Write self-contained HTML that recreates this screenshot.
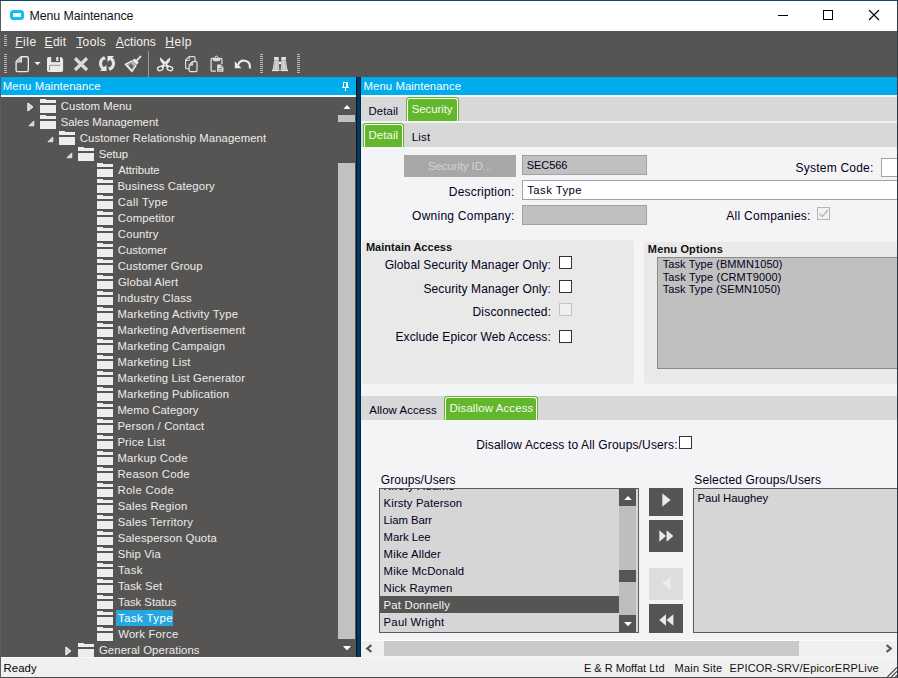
<!DOCTYPE html>
<html lang="en"><head><meta charset="utf-8"><title>Menu Maintenance</title>
<style>
html,body{margin:0;padding:0;background:#fff;}
body{width:898px;height:678px;position:relative;overflow:hidden;font-family:'Liberation Sans',sans-serif;}
#w{position:absolute;left:0;top:0;width:898px;height:678px;overflow:hidden;}
#w div,#w svg,#w span{position:absolute;display:block;}
#w .t{white-space:nowrap;line-height:16px;}
#w u{text-decoration:underline;text-underline-offset:1px;text-decoration-thickness:1px;}
</style></head><body><div id="w">
<div style="left:0px;top:0px;width:898px;height:678px;background:#fff;"></div>
<div style="left:0px;top:0px;width:898px;height:1px;background:#0f4b66;"></div>
<svg style="left:10px;top:10px" width="14" height="10" viewBox="0 0 14 10"><rect x="1.5" y="1.5" width="11" height="7" rx="2" fill="#fff" stroke="#10bef6" stroke-width="3"/></svg>
<div style="left:778px;top:15px;width:10px;height:1px;background:#000;"></div>
<div style="left:823px;top:10px;width:10px;height:10px;border:1px solid #000;box-sizing:border-box;"></div>
<svg style="left:868px;top:9px" width="12" height="12" viewBox="0 0 12 12"><path d="M1 1 L11 11 M11 1 L1 11" stroke="#000" stroke-width="1.1" fill="none"/></svg>
<div style="left:0px;top:31px;width:898px;height:46px;background:#575553;"></div>
<div style="left:4px;top:35px;width:3px;height:1px;background:#b9b8b6;"></div>
<div style="left:4px;top:37px;width:3px;height:1px;background:#b9b8b6;"></div>
<div style="left:4px;top:39px;width:3px;height:1px;background:#b9b8b6;"></div>
<div style="left:4px;top:41px;width:3px;height:1px;background:#b9b8b6;"></div>
<div style="left:4px;top:43px;width:3px;height:1px;background:#b9b8b6;"></div>
<div style="left:4px;top:45px;width:3px;height:1px;background:#b9b8b6;"></div>
<div style="left:4px;top:54px;width:3px;height:1px;background:#b9b8b6;"></div>
<div style="left:4px;top:56px;width:3px;height:1px;background:#b9b8b6;"></div>
<div style="left:4px;top:58px;width:3px;height:1px;background:#b9b8b6;"></div>
<div style="left:4px;top:60px;width:3px;height:1px;background:#b9b8b6;"></div>
<div style="left:4px;top:62px;width:3px;height:1px;background:#b9b8b6;"></div>
<div style="left:4px;top:64px;width:3px;height:1px;background:#b9b8b6;"></div>
<div style="left:4px;top:66px;width:3px;height:1px;background:#b9b8b6;"></div>
<div style="left:4px;top:68px;width:3px;height:1px;background:#b9b8b6;"></div>
<div style="left:4px;top:70px;width:3px;height:1px;background:#b9b8b6;"></div>
<div style="left:4px;top:72px;width:3px;height:1px;background:#b9b8b6;"></div>
<div style="left:260px;top:54px;width:3px;height:1px;background:#b9b8b6;"></div>
<div style="left:260px;top:56px;width:3px;height:1px;background:#b9b8b6;"></div>
<div style="left:260px;top:58px;width:3px;height:1px;background:#b9b8b6;"></div>
<div style="left:260px;top:60px;width:3px;height:1px;background:#b9b8b6;"></div>
<div style="left:260px;top:62px;width:3px;height:1px;background:#b9b8b6;"></div>
<div style="left:260px;top:64px;width:3px;height:1px;background:#b9b8b6;"></div>
<div style="left:260px;top:66px;width:3px;height:1px;background:#b9b8b6;"></div>
<div style="left:260px;top:68px;width:3px;height:1px;background:#b9b8b6;"></div>
<div style="left:260px;top:70px;width:3px;height:1px;background:#b9b8b6;"></div>
<div style="left:260px;top:72px;width:3px;height:1px;background:#b9b8b6;"></div>
<div style="left:297px;top:54px;width:3px;height:1px;background:#b9b8b6;"></div>
<div style="left:297px;top:56px;width:3px;height:1px;background:#b9b8b6;"></div>
<div style="left:297px;top:58px;width:3px;height:1px;background:#b9b8b6;"></div>
<div style="left:297px;top:60px;width:3px;height:1px;background:#b9b8b6;"></div>
<div style="left:297px;top:62px;width:3px;height:1px;background:#b9b8b6;"></div>
<div style="left:297px;top:64px;width:3px;height:1px;background:#b9b8b6;"></div>
<div style="left:297px;top:66px;width:3px;height:1px;background:#b9b8b6;"></div>
<div style="left:297px;top:68px;width:3px;height:1px;background:#b9b8b6;"></div>
<div style="left:297px;top:70px;width:3px;height:1px;background:#b9b8b6;"></div>
<div style="left:297px;top:72px;width:3px;height:1px;background:#b9b8b6;"></div>
<div style="left:148px;top:51px;width:1px;height:26px;background:#9c9a98;"></div>
<div style="left:0px;top:77px;width:356px;height:18px;background:#00abee;"></div>
<div style="left:0px;top:95px;width:356px;height:2px;background:#fbf9f7;"></div>
<div style="left:0px;top:97px;width:356px;height:560px;background:#575553;"></div>
<div style="left:343px;top:82px;width:5px;height:1px;background:#fff;"></div>
<div style="left:343px;top:82px;width:1px;height:5px;background:#fff;"></div>
<div style="left:346px;top:82px;width:2px;height:5px;background:#fff;"></div>
<div style="left:342px;top:87px;width:7px;height:1px;background:#fff;"></div>
<div style="left:345px;top:88px;width:1px;height:3px;background:#fff;"></div>
<div style="left:884px;top:82px;width:5px;height:1px;background:#fff;"></div>
<div style="left:884px;top:82px;width:1px;height:5px;background:#fff;"></div>
<div style="left:887px;top:82px;width:2px;height:5px;background:#fff;"></div>
<div style="left:883px;top:87px;width:7px;height:1px;background:#fff;"></div>
<div style="left:886px;top:88px;width:1px;height:3px;background:#fff;"></div>
<div style="left:338px;top:115px;width:17px;height:7px;background:#c1c1c1;"></div>
<div style="left:338px;top:163px;width:17px;height:476px;background:#c1c1c1;"></div>
<svg style="left:342.6px;top:104.8px" width="8" height="4.5" viewBox="0 0 8 4.5"><path d="M0 4.5 L4.0 0 L8 4.5 Z" fill="#fff"/></svg>
<svg style="left:342.6px;top:645.8px" width="8" height="4.5" viewBox="0 0 8 4.5"><path d="M0 0 L4.0 4.5 L8 0 Z" fill="#fff"/></svg>
<div style="left:40px;top:99.2px;width:6px;height:2px;background:#ededed;"></div>
<div style="left:40px;top:100.3px;width:16px;height:2.7px;background:#ededed;"></div>
<div style="left:40px;top:104.6px;width:16px;height:8.2px;background:#ededed;"></div>
<svg style="left:26.8px;top:101.5px" width="7" height="10" viewBox="0 0 7 10"><path d="M0.9 1 L5.9 5 L0.9 9 Z" fill="#cfcfcf" stroke="#fff" stroke-width="1" stroke-linejoin="miter"/></svg>
<div style="left:40px;top:115.2px;width:6px;height:2px;background:#ededed;"></div>
<div style="left:40px;top:116.3px;width:16px;height:2.7px;background:#ededed;"></div>
<div style="left:40px;top:120.6px;width:16px;height:8.2px;background:#ededed;"></div>
<svg style="left:27.8px;top:120px" width="7" height="7" viewBox="0 0 7 7"><path d="M5.8 0.9 V5.8 H0.9 Z" fill="#d6d6d6" stroke="#f6f6f6" stroke-width="0.8"/></svg>
<div style="left:59px;top:131.2px;width:6px;height:2px;background:#ededed;"></div>
<div style="left:59px;top:132.3px;width:16px;height:2.7px;background:#ededed;"></div>
<div style="left:59px;top:136.6px;width:16px;height:8.2px;background:#ededed;"></div>
<svg style="left:46.8px;top:136px" width="7" height="7" viewBox="0 0 7 7"><path d="M5.8 0.9 V5.8 H0.9 Z" fill="#d6d6d6" stroke="#f6f6f6" stroke-width="0.8"/></svg>
<div style="left:78px;top:147.2px;width:6px;height:2px;background:#ededed;"></div>
<div style="left:78px;top:148.3px;width:16px;height:2.7px;background:#ededed;"></div>
<div style="left:78px;top:152.6px;width:16px;height:8.2px;background:#ededed;"></div>
<svg style="left:65.8px;top:152px" width="7" height="7" viewBox="0 0 7 7"><path d="M5.8 0.9 V5.8 H0.9 Z" fill="#d6d6d6" stroke="#f6f6f6" stroke-width="0.8"/></svg>
<div style="left:97px;top:163.2px;width:6px;height:2px;background:#ededed;"></div>
<div style="left:97px;top:164.3px;width:16px;height:2.7px;background:#ededed;"></div>
<div style="left:97px;top:168.6px;width:16px;height:8.2px;background:#ededed;"></div>
<div style="left:97px;top:179.2px;width:6px;height:2px;background:#ededed;"></div>
<div style="left:97px;top:180.3px;width:16px;height:2.7px;background:#ededed;"></div>
<div style="left:97px;top:184.6px;width:16px;height:8.2px;background:#ededed;"></div>
<div style="left:97px;top:195.2px;width:6px;height:2px;background:#ededed;"></div>
<div style="left:97px;top:196.3px;width:16px;height:2.7px;background:#ededed;"></div>
<div style="left:97px;top:200.6px;width:16px;height:8.2px;background:#ededed;"></div>
<div style="left:97px;top:211.2px;width:6px;height:2px;background:#ededed;"></div>
<div style="left:97px;top:212.3px;width:16px;height:2.7px;background:#ededed;"></div>
<div style="left:97px;top:216.6px;width:16px;height:8.2px;background:#ededed;"></div>
<div style="left:97px;top:227.2px;width:6px;height:2px;background:#ededed;"></div>
<div style="left:97px;top:228.3px;width:16px;height:2.7px;background:#ededed;"></div>
<div style="left:97px;top:232.6px;width:16px;height:8.2px;background:#ededed;"></div>
<div style="left:97px;top:243.2px;width:6px;height:2px;background:#ededed;"></div>
<div style="left:97px;top:244.3px;width:16px;height:2.7px;background:#ededed;"></div>
<div style="left:97px;top:248.6px;width:16px;height:8.2px;background:#ededed;"></div>
<div style="left:97px;top:259.2px;width:6px;height:2px;background:#ededed;"></div>
<div style="left:97px;top:260.3px;width:16px;height:2.7px;background:#ededed;"></div>
<div style="left:97px;top:264.6px;width:16px;height:8.2px;background:#ededed;"></div>
<div style="left:97px;top:275.2px;width:6px;height:2px;background:#ededed;"></div>
<div style="left:97px;top:276.3px;width:16px;height:2.7px;background:#ededed;"></div>
<div style="left:97px;top:280.6px;width:16px;height:8.2px;background:#ededed;"></div>
<div style="left:97px;top:291.2px;width:6px;height:2px;background:#ededed;"></div>
<div style="left:97px;top:292.3px;width:16px;height:2.7px;background:#ededed;"></div>
<div style="left:97px;top:296.6px;width:16px;height:8.2px;background:#ededed;"></div>
<div style="left:97px;top:307.2px;width:6px;height:2px;background:#ededed;"></div>
<div style="left:97px;top:308.3px;width:16px;height:2.7px;background:#ededed;"></div>
<div style="left:97px;top:312.6px;width:16px;height:8.2px;background:#ededed;"></div>
<div style="left:97px;top:323.2px;width:6px;height:2px;background:#ededed;"></div>
<div style="left:97px;top:324.3px;width:16px;height:2.7px;background:#ededed;"></div>
<div style="left:97px;top:328.6px;width:16px;height:8.2px;background:#ededed;"></div>
<div style="left:97px;top:339.2px;width:6px;height:2px;background:#ededed;"></div>
<div style="left:97px;top:340.3px;width:16px;height:2.7px;background:#ededed;"></div>
<div style="left:97px;top:344.6px;width:16px;height:8.2px;background:#ededed;"></div>
<div style="left:97px;top:355.2px;width:6px;height:2px;background:#ededed;"></div>
<div style="left:97px;top:356.3px;width:16px;height:2.7px;background:#ededed;"></div>
<div style="left:97px;top:360.6px;width:16px;height:8.2px;background:#ededed;"></div>
<div style="left:97px;top:371.2px;width:6px;height:2px;background:#ededed;"></div>
<div style="left:97px;top:372.3px;width:16px;height:2.7px;background:#ededed;"></div>
<div style="left:97px;top:376.6px;width:16px;height:8.2px;background:#ededed;"></div>
<div style="left:97px;top:387.2px;width:6px;height:2px;background:#ededed;"></div>
<div style="left:97px;top:388.3px;width:16px;height:2.7px;background:#ededed;"></div>
<div style="left:97px;top:392.6px;width:16px;height:8.2px;background:#ededed;"></div>
<div style="left:97px;top:403.2px;width:6px;height:2px;background:#ededed;"></div>
<div style="left:97px;top:404.3px;width:16px;height:2.7px;background:#ededed;"></div>
<div style="left:97px;top:408.6px;width:16px;height:8.2px;background:#ededed;"></div>
<div style="left:97px;top:419.2px;width:6px;height:2px;background:#ededed;"></div>
<div style="left:97px;top:420.3px;width:16px;height:2.7px;background:#ededed;"></div>
<div style="left:97px;top:424.6px;width:16px;height:8.2px;background:#ededed;"></div>
<div style="left:97px;top:435.2px;width:6px;height:2px;background:#ededed;"></div>
<div style="left:97px;top:436.3px;width:16px;height:2.7px;background:#ededed;"></div>
<div style="left:97px;top:440.6px;width:16px;height:8.2px;background:#ededed;"></div>
<div style="left:97px;top:451.2px;width:6px;height:2px;background:#ededed;"></div>
<div style="left:97px;top:452.3px;width:16px;height:2.7px;background:#ededed;"></div>
<div style="left:97px;top:456.6px;width:16px;height:8.2px;background:#ededed;"></div>
<div style="left:97px;top:467.2px;width:6px;height:2px;background:#ededed;"></div>
<div style="left:97px;top:468.3px;width:16px;height:2.7px;background:#ededed;"></div>
<div style="left:97px;top:472.6px;width:16px;height:8.2px;background:#ededed;"></div>
<div style="left:97px;top:483.2px;width:6px;height:2px;background:#ededed;"></div>
<div style="left:97px;top:484.3px;width:16px;height:2.7px;background:#ededed;"></div>
<div style="left:97px;top:488.6px;width:16px;height:8.2px;background:#ededed;"></div>
<div style="left:97px;top:499.2px;width:6px;height:2px;background:#ededed;"></div>
<div style="left:97px;top:500.3px;width:16px;height:2.7px;background:#ededed;"></div>
<div style="left:97px;top:504.6px;width:16px;height:8.2px;background:#ededed;"></div>
<div style="left:97px;top:515.2px;width:6px;height:2px;background:#ededed;"></div>
<div style="left:97px;top:516.3px;width:16px;height:2.7px;background:#ededed;"></div>
<div style="left:97px;top:520.6px;width:16px;height:8.2px;background:#ededed;"></div>
<div style="left:97px;top:531.2px;width:6px;height:2px;background:#ededed;"></div>
<div style="left:97px;top:532.3px;width:16px;height:2.7px;background:#ededed;"></div>
<div style="left:97px;top:536.6px;width:16px;height:8.2px;background:#ededed;"></div>
<div style="left:97px;top:547.2px;width:6px;height:2px;background:#ededed;"></div>
<div style="left:97px;top:548.3px;width:16px;height:2.7px;background:#ededed;"></div>
<div style="left:97px;top:552.6px;width:16px;height:8.2px;background:#ededed;"></div>
<div style="left:97px;top:563.2px;width:6px;height:2px;background:#ededed;"></div>
<div style="left:97px;top:564.3px;width:16px;height:2.7px;background:#ededed;"></div>
<div style="left:97px;top:568.6px;width:16px;height:8.2px;background:#ededed;"></div>
<div style="left:97px;top:579.2px;width:6px;height:2px;background:#ededed;"></div>
<div style="left:97px;top:580.3px;width:16px;height:2.7px;background:#ededed;"></div>
<div style="left:97px;top:584.6px;width:16px;height:8.2px;background:#ededed;"></div>
<div style="left:97px;top:595.2px;width:6px;height:2px;background:#ededed;"></div>
<div style="left:97px;top:596.3px;width:16px;height:2.7px;background:#ededed;"></div>
<div style="left:97px;top:600.6px;width:16px;height:8.2px;background:#ededed;"></div>
<div style="left:116px;top:610px;width:57px;height:16px;background:#27a7e2;"></div>
<div style="left:97px;top:611.2px;width:6px;height:2px;background:#ededed;"></div>
<div style="left:97px;top:612.3px;width:16px;height:2.7px;background:#ededed;"></div>
<div style="left:97px;top:616.6px;width:16px;height:8.2px;background:#ededed;"></div>
<div style="left:97px;top:627.2px;width:6px;height:2px;background:#ededed;"></div>
<div style="left:97px;top:628.3px;width:16px;height:2.7px;background:#ededed;"></div>
<div style="left:97px;top:632.6px;width:16px;height:8.2px;background:#ededed;"></div>
<div style="left:78px;top:643.2px;width:6px;height:2px;background:#ededed;"></div>
<div style="left:78px;top:644.3px;width:16px;height:2.7px;background:#ededed;"></div>
<div style="left:78px;top:648.6px;width:16px;height:8.2px;background:#ededed;"></div>
<svg style="left:64.8px;top:645.5px" width="7" height="10" viewBox="0 0 7 10"><path d="M0.9 1 L5.9 5 L0.9 9 Z" fill="#cfcfcf" stroke="#fff" stroke-width="1" stroke-linejoin="miter"/></svg>
<div style="left:356px;top:77px;width:1px;height:580px;background:#07111b;"></div>
<div style="left:357px;top:77px;width:4px;height:580px;background:#003a60;"></div>
<div style="left:360px;top:77px;width:1px;height:580px;background:#012a47;"></div>
<div style="left:361px;top:77px;width:536px;height:18px;background:#00abee;"></div>
<div style="left:361px;top:95px;width:536px;height:2px;background:#f7f5f3;"></div>
<div style="left:361px;top:97px;width:536px;height:24px;background:#d8d8d8;"></div>
<div style="left:361px;top:121px;width:536px;height:2px;background:#f2f2f2;"></div>
<div style="left:361px;top:123px;width:536px;height:24px;background:#d8d8d8;"></div>
<div style="left:361px;top:147px;width:536px;height:493px;background:#f4f4f6;"></div>
<div style="left:406px;top:97px;width:53px;height:24px;background:#63b72d;border-radius:3.5px 3.5px 0 0;"></div>
<div style="left:407px;top:98px;width:51px;height:26px;border:1px solid #fbfdf9;border-bottom:none;box-sizing:border-box;border-radius:3px 3px 0 0;clip-path:inset(0 0 3px 0);"></div>
<div style="left:363px;top:123px;width:41px;height:24px;background:#63b72d;border-radius:3.5px 3.5px 0 0;"></div>
<div style="left:364px;top:124px;width:39px;height:26px;border:1px solid #fbfdf9;border-bottom:none;box-sizing:border-box;border-radius:3px 3px 0 0;clip-path:inset(0 0 3px 0);"></div>
<div style="left:404px;top:155px;width:112px;height:22px;background:#a7a7a7;"></div>
<div style="left:522px;top:155px;width:125px;height:20px;background:#c0c0c0;border:1px solid #a2a2a2;box-sizing:border-box;"></div>
<div style="left:522px;top:180px;width:380px;height:20px;background:#fff;border:1px solid #a2a2a2;box-sizing:border-box;"></div>
<div style="left:522px;top:205px;width:125px;height:20px;background:#c0c0c0;border:1px solid #a2a2a2;box-sizing:border-box;"></div>
<div style="left:881px;top:158px;width:30px;height:19px;background:#fff;border:1px solid #a2a2a2;box-sizing:border-box;"></div>
<div style="left:817px;top:207px;width:13px;height:13px;background:#f1f1f1;border:1px solid #b4b4b4;box-sizing:border-box;"></div>
<svg style="left:817px;top:207px" width="13" height="13" viewBox="0 0 13 13"><path d="M2.4 6.6 L5.3 9.6 L10.9 3" stroke="#b4b4b4" stroke-width="1.3" fill="none"/></svg>
<div style="left:362px;top:240px;width:272px;height:144px;background:#e9e9e9;border-radius:4px;"></div>
<div style="left:644px;top:242px;width:260px;height:142px;background:#e9e9e9;border-radius:4px;"></div>
<div style="left:559px;top:256px;width:13px;height:13px;background:#fff;border:1px solid #333;box-sizing:border-box;"></div>
<div style="left:559px;top:280px;width:13px;height:13px;background:#fff;border:1px solid #333;box-sizing:border-box;"></div>
<div style="left:559px;top:303px;width:13px;height:13px;background:#efefef;border:1px solid #c4c4c4;box-sizing:border-box;"></div>
<div style="left:559px;top:330px;width:13px;height:13px;background:#fff;border:1px solid #333;box-sizing:border-box;"></div>
<div style="left:657px;top:257px;width:260px;height:112px;background:#c0c0c0;border:1px solid #8c8c8c;box-sizing:border-box;"></div>
<div style="left:361px;top:396px;width:536px;height:24px;background:#d8d8d8;"></div>
<div style="left:444px;top:396px;width:94px;height:24px;background:#63b72d;border-radius:3.5px 3.5px 0 0;"></div>
<div style="left:445px;top:397px;width:92px;height:26px;border:1px solid #fbfdf9;border-bottom:none;box-sizing:border-box;border-radius:3px 3px 0 0;clip-path:inset(0 0 3px 0);"></div>
<div style="left:679px;top:436px;width:13px;height:13px;background:#fff;border:1px solid #333;box-sizing:border-box;"></div>
<div style="left:379px;top:488px;width:260px;height:145px;background:#d6d6d6;border:1px solid #5a5a5a;box-sizing:border-box;"></div>
<div style="left:380px;top:596px;width:239px;height:17px;background:#575553;"></div>
<div style="left:380px;top:489px;width:239px;height:143px;overflow:hidden;" id="clip1">
<span class="t" style="left:3.60px;top:-11px;font-size:11.33px;color:#00001a;letter-spacing:0.418px;">Kirsty Adams</span>
<span class="t" style="left:3.60px;top:6px;font-size:11.33px;color:#00001a;letter-spacing:0.122px;">Kirsty Paterson</span>
<span class="t" style="left:3.60px;top:23px;font-size:11.33px;color:#00001a;letter-spacing:-0.070px;">Liam Barr</span>
<span class="t" style="left:3.60px;top:40px;font-size:11.33px;color:#00001a;letter-spacing:-0.045px;">Mark Lee</span>
<span class="t" style="left:3.60px;top:57px;font-size:11.33px;color:#00001a;letter-spacing:0.189px;">Mike Allder</span>
<span class="t" style="left:3.60px;top:74px;font-size:11.33px;color:#00001a;letter-spacing:0.209px;">Mike McDonald</span>
<span class="t" style="left:3.60px;top:91px;font-size:11.33px;color:#00001a;letter-spacing:0.127px;">Nick Raymen</span>
<span class="t" style="left:3.60px;top:108px;font-size:11.33px;color:#f4f4f4;letter-spacing:0.191px;">Pat Donnelly</span>
<span class="t" style="left:3.60px;top:125px;font-size:11.33px;color:#00001a;letter-spacing:0.219px;">Paul Wright</span>
</div>
<div style="left:619px;top:489px;width:17px;height:143px;background:#bebebe;"></div>
<div style="left:619px;top:489px;width:17px;height:17px;background:#575553;"></div>
<div style="left:619px;top:615px;width:17px;height:17px;background:#575553;"></div>
<div style="left:619px;top:570px;width:17px;height:12px;background:#575553;"></div>
<svg style="left:623.5px;top:496px" width="8" height="4.3" viewBox="0 0 8 4.3"><path d="M0 4.3 L4.0 0 L8 4.3 Z" fill="#fff"/></svg>
<svg style="left:623.5px;top:622px" width="8" height="4.3" viewBox="0 0 8 4.3"><path d="M0 0 L4.0 4.3 L8 0 Z" fill="#fff"/></svg>
<div style="left:649px;top:488px;width:34px;height:28px;background:#575553;"></div>
<div style="left:649px;top:520px;width:34px;height:32px;background:#575553;"></div>
<div style="left:649px;top:568px;width:34px;height:32px;background:#dddddd;"></div>
<div style="left:649px;top:604px;width:34px;height:29px;background:#575553;"></div>
<svg style="left:661.5px;top:493px" width="9" height="14" viewBox="0 0 9 14"><path d="M0.3 0.3 L8.6 7 L0.3 13.7 Z" fill="#e9e9e9"/></svg>
<svg style="left:658.5px;top:530px" width="15" height="12" viewBox="0 0 15 12"><path d="M0.3 0.3 L7 6 L0.3 11.7 Z M7.6 0.3 L14.4 6 L7.6 11.7 Z" fill="#e9e9e9"/></svg>
<svg style="left:661.5px;top:576px" width="9" height="14" viewBox="0 0 9 14"><path d="M8.6 0.3 L0.3 7 L8.6 13.7 Z" fill="#ececec"/></svg>
<svg style="left:658.5px;top:614px" width="15" height="12" viewBox="0 0 15 12"><path d="M7 0.3 L0.3 6 L7 11.7 Z M14.4 0.3 L7.6 6 L14.4 11.7 Z" fill="#e9e9e9"/></svg>
<div style="left:693px;top:488px;width:220px;height:145px;background:#d6d6d6;border:1px solid #5a5a5a;box-sizing:border-box;"></div>
<div style="left:361px;top:640px;width:536px;height:17px;background:#f0f0f0;"></div>
<div style="left:361px;top:640px;width:536px;height:1px;background:#fbfbfb;"></div>
<div style="left:384px;top:641px;width:415px;height:15px;background:#c9c9c9;"></div>
<svg style="left:365px;top:644px" width="8" height="9" viewBox="0 0 8 9"><path d="M6.4 1.1 L2.2 4.5 L6.4 7.9" stroke="#555" stroke-width="2.1" fill="none"/></svg>
<svg style="left:885px;top:644px" width="8" height="9" viewBox="0 0 8 9"><path d="M1.6 1.1 L5.8 4.5 L1.6 7.9" stroke="#555" stroke-width="2.1" fill="none"/></svg>
<div style="left:0px;top:657px;width:898px;height:21px;background:#f0f0f0;"></div>
<div style="left:1px;top:657px;width:896px;height:1px;background:#f8f8f8;"></div>
<svg style="left:884px;top:664px" width="13" height="13" viewBox="0 0 13 13"><path d="M2 13 L13 2 M6 13 L13 6 M10 13 L13 10" stroke="#fff" stroke-width="1.3"/><path d="M3.3 13 L13 3.3 M7.3 13 L13 7.3 M11.3 13 L13 11.3" stroke="#585858" stroke-width="1.4"/></svg>
<div style="left:0px;top:677px;width:898px;height:1px;background:#4d4d4d;"></div>
<div style="left:0px;top:1px;width:1px;height:677px;background:#5c5c5c;"></div>
<div style="left:897px;top:1px;width:1px;height:677px;background:#2d3b47;"></div>
<svg style="left:0;top:52px" width="310" height="25" viewBox="0 52 310 25" fill="none">
<!-- new document -->
<path d="M21 56.7 H27 Q28.3 56.7 28.3 58 V70.3 Q28.3 71.6 27 71.6 H17.4 Q16.1 71.6 16.1 70.3 V61.6 Z" stroke="#e6e6e6" stroke-width="1.4" stroke-linejoin="round"/>
<path d="M21.2 57.2 V61.9 H16.4 Z" fill="#bdbcbb"/>
<path d="M21.4 57 V62 H16.2" stroke="#e6e6e6" stroke-width="1.1"/>
<path d="M34.5 62 H40.5 L37.5 65.3 Z" fill="#f4f4f4"/>
<!-- save -->
<path d="M48.8 57 H61.2 L63.1 58.9 V70.3 Q63.1 72.1 61.3 72.1 H48.8 Q47 72.1 47 70.3 V58.8 Q47 57 48.8 57 Z" fill="#ebebeb"/>
<rect x="51.2" y="56.8" width="8.8" height="5.3" fill="#575553"/>
<rect x="56.2" y="57" width="2.2" height="4" fill="#e4e4e4"/>
<path d="M49.6 70.4 V65.3 H60.2" stroke="#8b8a89" stroke-width="0.9"/>
<!-- delete X -->
<path d="M75 58.2 L87 70 M87 58.2 L75 70" stroke="#dadada" stroke-width="3.3"/>
<!-- refresh -->
<path d="M104.78 57.67 A6.5 6.2 0 0 0 103.75 68.87" stroke="#e4e4e4" stroke-width="3"/>
<path d="M103.4 56.2 L106.2 59.4 L102.4 59.6 Z" fill="#e4e4e4"/>
<path d="M99.8 71 H106.5 V65 Z" fill="#ebebeb"/>
<path d="M109.22 69.33 A6.5 6.2 0 0 0 110.25 58.13" stroke="#e4e4e4" stroke-width="3"/>
<path d="M110.6 70.8 L107.8 67.6 L111.6 67.4 Z" fill="#e4e4e4"/>
<path d="M114.2 56 H107.5 V62 Z" fill="#ebebeb"/>
<!-- broom -->
<path d="M140.6 56.5 L136.4 60.8" stroke="#f0f0f0" stroke-width="1.7" stroke-linecap="round"/>
<path d="M132.2 60.2 L134.6 58.4 L138.8 62.6 L136.6 64.8 Z" fill="#ececec"/>
<path d="M131.6 61 L136 65.4 L132 71.6 L125.2 64.3 Z" fill="#a09f9d" stroke="#ececec" stroke-width="1.3" stroke-linejoin="round"/>
<path d="M130.6 63.6 L133.4 66.4 L131.6 68.8 L128.8 65.8 Z" fill="#5f5d5b"/>
<path d="M126.6 65 L129 66.6 M128.4 67.2 L130.6 68.4 M130.2 69.2 L132 70" stroke="#f0f0f0" stroke-width="1"/>
<path d="M132.2 61.4 L136.2 65.2" stroke="#7a7876" stroke-width="0.6"/>
<!-- scissors -->
<path d="M159.9 57.3 Q159.6 61.4 163.6 64.6 L167.6 68.2 L169.4 66.4 L166.6 63.6 Q163.8 60.2 159.9 57.3 Z" fill="#eaeaea"/>
<path d="M170.3 57.3 Q170.6 61.4 166.6 64.6 L162.6 68.2 L160.8 66.4 L163.6 63.6 Q166.4 60.2 170.3 57.3 Z" fill="#eaeaea"/>
<ellipse cx="160.3" cy="68.5" rx="2.9" ry="2" stroke="#eaeaea" stroke-width="1.3" transform="rotate(-22 160.3 68.5)"/>
<ellipse cx="169.9" cy="68.5" rx="2.9" ry="2" stroke="#eaeaea" stroke-width="1.3" transform="rotate(22 169.9 68.5)"/>
<circle cx="165.1" cy="64.4" r="0.6" fill="#575553"/>
<!-- copy -->
<path d="M195 61 V57.6 Q195 56.6 194 56.6 H189 L185.6 60 V67.6 Q185.6 68.6 186.6 68.6 H188.8" stroke="#dcdcdc" stroke-width="1.2" stroke-linejoin="round"/>
<path d="M189.2 57 V60.4 H185.8" stroke="#dcdcdc" stroke-width="1"/>
<path d="M192.4 61.6 H196 Q197 61.6 197 62.6 V70.6 Q197 71.6 196 71.6 H190.2 Q189.2 71.6 189.2 70.6 V64.8 Z" stroke="#e2e2e2" stroke-width="1.2" stroke-linejoin="round"/>
<path d="M192.6 62 V65.2 H189.4 Z" fill="#c4c3c2" stroke="#e2e2e2" stroke-width="0.8"/>
<!-- paste -->
<path d="M216 71.2 H212 Q211.1 71.2 211.1 70.3 V59.4 Q211.1 58.5 212 58.5 H221 Q221.9 58.5 221.9 59.4 V64" stroke="#dedede" stroke-width="1.3"/>
<path d="M213 59 H220 V60.8 Q216.5 61.8 213 60.8 Z" fill="#dedede"/>
<circle cx="216.5" cy="57.6" r="1.5" stroke="#dedede" stroke-width="1"/>
<path d="M217.2 64.6 H221 L223.4 67 V71.8 H217.2 Z" fill="#e4e4e4"/>
<path d="M218.6 68.4 H222 M218.6 70.2 H222" stroke="#6e6c6a" stroke-width="0.8"/>
<path d="M221 64.6 V67 H223.4" stroke="#8a8988" stroke-width="0.7"/>
<!-- undo -->
<path d="M238.2 64.8 A6 6 0 0 1 249.9 66.4 L249.9 68.6" stroke="#ececec" stroke-width="2.1"/>
<path d="M234.8 61.2 V68.2 H241.6 Z" fill="#ececec"/>
<!-- binoculars -->
<rect x="274.1" y="57" width="4.6" height="3.4" fill="#e2e2e2"/>
<rect x="281.3" y="57" width="4.6" height="3.4" fill="#e2e2e2"/>
<path d="M274 60.4 H278.8 L279.3 69.7 H272.7 Z" fill="#d4d4d4"/>
<path d="M281.2 60.4 H286 L287.3 69.7 H280.7 Z" fill="#d4d4d4"/>
<rect x="272" y="69.6" width="7.5" height="1.5" fill="#e8e8e8"/>
<rect x="280.5" y="69.6" width="7.5" height="1.5" fill="#e8e8e8"/>
<rect x="279" y="61.6" width="2" height="2.4" fill="#ececec"/>
<path d="M274.8 61.2 V69.4 M277.9 61.2 V69.4 M282.1 61.2 V69.4 M285.2 61.2 V69.4" stroke="#b0afae" stroke-width="0.7"/>
</svg>

<span class="t" style="left:29.58px;top:8px;font-size:12.4px;color:#141414;letter-spacing:-0.103px;">Menu Maintenance</span>
<span class="t" style="left:15.30px;top:34px;font-size:12px;color:#f2f2f2;letter-spacing:0.474px;"><u>F</u>ile</span>
<span class="t" style="left:44.60px;top:34px;font-size:12px;color:#f2f2f2;letter-spacing:0.290px;"><u>E</u>dit</span>
<span class="t" style="left:76.20px;top:34px;font-size:12px;color:#f2f2f2;letter-spacing:0.399px;"><u>T</u>ools</span>
<span class="t" style="left:115.83px;top:34px;font-size:12px;color:#f2f2f2;letter-spacing:0.101px;"><u>A</u>ctions</span>
<span class="t" style="left:165.30px;top:34px;font-size:12px;color:#f2f2f2;letter-spacing:0.504px;"><u>H</u>elp</span>
<span class="t" style="left:2.80px;top:78px;font-size:11.33px;color:#fff;letter-spacing:0.086px;">Menu Maintenance</span>
<span class="t" style="left:60.87px;top:98px;font-size:11.33px;color:#ececec;letter-spacing:0.022px;">Custom Menu</span>
<span class="t" style="left:60.74px;top:114px;font-size:11.33px;color:#ececec;">Sales Management</span>
<span class="t" style="left:79.87px;top:130px;font-size:11.33px;color:#ececec;letter-spacing:0.076px;">Customer Relationship Management</span>
<span class="t" style="left:98.74px;top:146px;font-size:11.33px;color:#ececec;letter-spacing:-0.089px;">Setup</span>
<span class="t" style="left:118.23px;top:162px;font-size:11.33px;color:#ececec;letter-spacing:-0.118px;">Attribute</span>
<span class="t" style="left:117.40px;top:178px;font-size:11.33px;color:#ececec;letter-spacing:0.144px;">Business Category</span>
<span class="t" style="left:117.87px;top:194px;font-size:11.33px;color:#ececec;letter-spacing:0.327px;">Call Type</span>
<span class="t" style="left:117.87px;top:210px;font-size:11.33px;color:#ececec;letter-spacing:0.168px;">Competitor</span>
<span class="t" style="left:117.87px;top:226px;font-size:11.33px;color:#ececec;letter-spacing:0.149px;">Country</span>
<span class="t" style="left:117.87px;top:242px;font-size:11.33px;color:#ececec;">Customer</span>
<span class="t" style="left:117.87px;top:258px;font-size:11.33px;color:#ececec;letter-spacing:0.072px;">Customer Group</span>
<span class="t" style="left:117.91px;top:274px;font-size:11.33px;color:#ececec;letter-spacing:0.151px;">Global Alert</span>
<span class="t" style="left:117.28px;top:290px;font-size:11.33px;color:#ececec;letter-spacing:0.203px;">Industry Class</span>
<span class="t" style="left:117.40px;top:306px;font-size:11.33px;color:#ececec;letter-spacing:0.227px;">Marketing Activity Type</span>
<span class="t" style="left:117.40px;top:322px;font-size:11.33px;color:#ececec;letter-spacing:0.140px;">Marketing Advertisement</span>
<span class="t" style="left:117.40px;top:338px;font-size:11.33px;color:#ececec;letter-spacing:0.184px;">Marketing Campaign</span>
<span class="t" style="left:117.40px;top:354px;font-size:11.33px;color:#ececec;letter-spacing:0.191px;">Marketing List</span>
<span class="t" style="left:117.40px;top:370px;font-size:11.33px;color:#ececec;letter-spacing:0.126px;">Marketing List Generator</span>
<span class="t" style="left:117.40px;top:386px;font-size:11.33px;color:#ececec;letter-spacing:0.164px;">Marketing Publication</span>
<span class="t" style="left:117.40px;top:402px;font-size:11.33px;color:#ececec;letter-spacing:0.039px;">Memo Category</span>
<span class="t" style="left:117.40px;top:418px;font-size:11.33px;color:#ececec;letter-spacing:0.166px;">Person / Contact</span>
<span class="t" style="left:117.40px;top:434px;font-size:11.33px;color:#ececec;letter-spacing:0.130px;">Price List</span>
<span class="t" style="left:117.40px;top:450px;font-size:11.33px;color:#ececec;letter-spacing:0.219px;">Markup Code</span>
<span class="t" style="left:117.40px;top:466px;font-size:11.33px;color:#ececec;letter-spacing:0.298px;">Reason Code</span>
<span class="t" style="left:117.40px;top:482px;font-size:11.33px;color:#ececec;letter-spacing:0.350px;">Role Code</span>
<span class="t" style="left:117.74px;top:498px;font-size:11.33px;color:#ececec;letter-spacing:0.203px;">Sales Region</span>
<span class="t" style="left:117.74px;top:514px;font-size:11.33px;color:#ececec;letter-spacing:0.219px;">Sales Territory</span>
<span class="t" style="left:117.74px;top:530px;font-size:11.33px;color:#ececec;letter-spacing:0.136px;">Salesperson Quota</span>
<span class="t" style="left:117.74px;top:546px;font-size:11.33px;color:#ececec;letter-spacing:0.140px;">Ship Via</span>
<span class="t" style="left:118.05px;top:562px;font-size:11.33px;color:#ececec;letter-spacing:0.377px;">Task</span>
<span class="t" style="left:118.05px;top:578px;font-size:11.33px;color:#ececec;letter-spacing:0.106px;">Task Set</span>
<span class="t" style="left:118.05px;top:594px;font-size:11.33px;color:#ececec;letter-spacing:-0.023px;">Task Status</span>
<span class="t" style="left:118.05px;top:610px;font-size:11.33px;color:#fff;letter-spacing:0.461px;">Task Type</span>
<span class="t" style="left:118.23px;top:626px;font-size:11.33px;color:#ececec;letter-spacing:0.183px;">Work Force</span>
<span class="t" style="left:98.91px;top:642px;font-size:11.33px;color:#ececec;letter-spacing:0.103px;">General Operations</span>
<span class="t" style="left:363.60px;top:78px;font-size:11.33px;color:#fff;letter-spacing:0.066px;">Menu Maintenance</span>
<span class="t" style="left:368.59px;top:103px;font-size:11.4px;color:#00001a;letter-spacing:0.069px;">Detail</span>
<span class="t" style="left:411.74px;top:101px;font-size:11.4px;color:#f6fbf0;letter-spacing:-0.061px;">Security</span>
<span class="t" style="left:368.59px;top:127px;font-size:11.4px;color:#f6fbf0;letter-spacing:0.069px;">Detail</span>
<span class="t" style="left:411.79px;top:129px;font-size:11.4px;color:#00001a;letter-spacing:0.194px;">List</span>
<span class="t" style="left:427.94px;top:158px;font-size:11.4px;color:#d3d3d3;letter-spacing:-0.077px;">Security ID...</span>
<span class="t" style="left:526.74px;top:157px;font-size:11px;color:#00001a;letter-spacing:-0.057px;">SEC566</span>
<span class="t" style="left:448.80px;top:184px;font-size:12px;color:#00001a;letter-spacing:0.195px;">Description:</span>
<span class="t" style="left:527.25px;top:182px;font-size:11.33px;color:#00001a;letter-spacing:0.436px;">Task Type</span>
<span class="t" style="left:412.11px;top:208px;font-size:12px;color:#00001a;letter-spacing:0.244px;">Owning Company:</span>
<span class="t" style="left:795.57px;top:160px;font-size:12px;color:#00001a;letter-spacing:0.217px;">System Code:</span>
<span class="t" style="left:726.33px;top:208px;font-size:12px;color:#00001a;letter-spacing:0.260px;">All Companies:</span>
<span class="t" style="left:365.95px;top:239px;font-size:11px;color:#111;font-weight:700;letter-spacing:0.021px;">Maintain Access</span>
<span class="t" style="left:647.85px;top:241px;font-size:11px;color:#111;font-weight:700;letter-spacing:0.152px;">Menu Options</span>
<span class="t" style="left:384.64px;top:257px;font-size:12px;color:#00001a;letter-spacing:0.104px;">Global Security Manager Only:</span>
<span class="t" style="left:423.47px;top:281px;font-size:12px;color:#00001a;letter-spacing:0.099px;">Security Manager Only:</span>
<span class="t" style="left:472.40px;top:304px;font-size:12px;color:#00001a;letter-spacing:0.222px;">Disconnected:</span>
<span class="t" style="left:395.40px;top:329px;font-size:12px;color:#00001a;letter-spacing:0.116px;">Exclude Epicor Web Access:</span>
<span class="t" style="left:662.65px;top:256px;font-size:11px;color:#00001a;letter-spacing:0.110px;">Task Type (BMMN1050)</span>
<span class="t" style="left:662.65px;top:269px;font-size:11px;color:#00001a;letter-spacing:0.154px;">Task Type (CRMT9000)</span>
<span class="t" style="left:662.65px;top:281px;font-size:11px;color:#00001a;letter-spacing:0.102px;">Task Type (SEMN1050)</span>
<span class="t" style="left:369.23px;top:402px;font-size:11.4px;color:#00001a;letter-spacing:0.099px;">Allow Access</span>
<span class="t" style="left:449.49px;top:400px;font-size:11.4px;color:#f6fbf0;letter-spacing:0.149px;">Disallow Access</span>
<span class="t" style="left:476.20px;top:437px;font-size:12px;color:#00001a;letter-spacing:0.150px;">Disallow Access to All Groups/Users:</span>
<span class="t" style="left:380.84px;top:472px;font-size:12px;color:#00001a;letter-spacing:0.060px;">Groups/Users</span>
<span class="t" style="left:694.37px;top:472px;font-size:12px;color:#00001a;letter-spacing:0.127px;">Selected Groups/Users</span>
<span class="t" style="left:697.40px;top:490px;font-size:11.33px;color:#00001a;letter-spacing:-0.027px;">Paul Haughey</span>
<span class="t" style="left:3.40px;top:660px;font-size:11.33px;color:#000;letter-spacing:0.141px;">Ready</span>
<span class="t" style="left:583.90px;top:660px;font-size:11px;color:#111;letter-spacing:0.010px;">E &amp; R Moffat Ltd</span>
<span class="t" style="left:674.60px;top:660px;font-size:11px;color:#111;letter-spacing:0.209px;">Main Site</span>
<span class="t" style="left:729.40px;top:660px;font-size:11px;color:#111;letter-spacing:0.176px;">EPICOR-SRV/EpicorERPLive</span>
</div></body></html>
